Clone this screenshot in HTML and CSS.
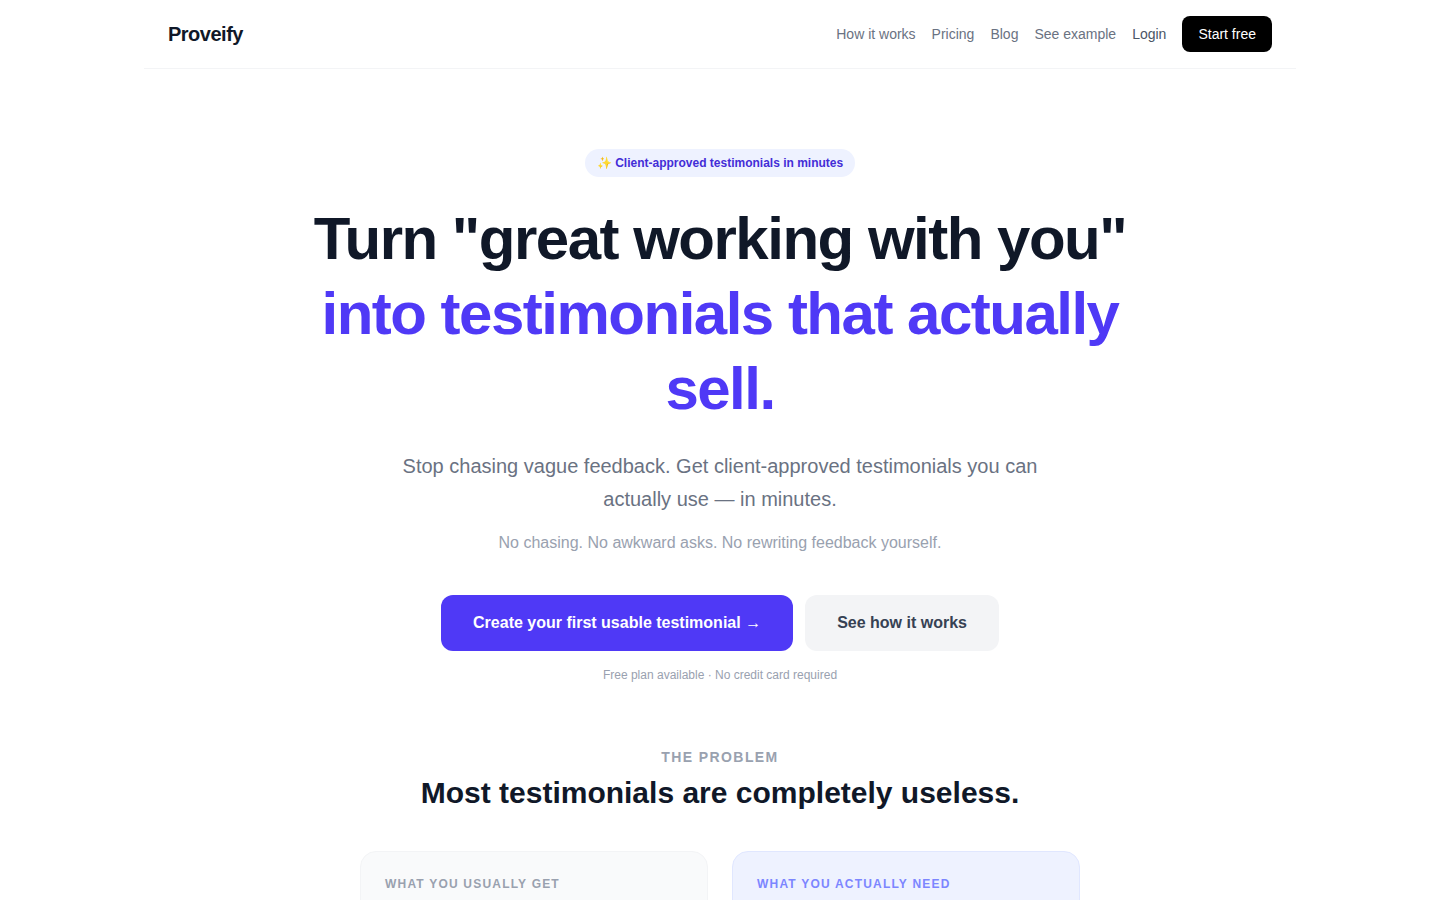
FILE: index.html
```html
<!DOCTYPE html>
<html lang="en">
<head>
<meta charset="utf-8">
<meta name="viewport" content="width=device-width, initial-scale=1">
<title>Proveify</title>
<link rel="stylesheet" href="styles.css">
</head>
<body>
<header class="site-header">
  <a class="brand" href="#">Proveify</a>
  <nav class="nav" aria-label="Main">
    <a class="nav-link" href="#how">How it works</a>
    <a class="nav-link" href="#pricing">Pricing</a>
    <a class="nav-link" href="#blog">Blog</a>
    <a class="nav-link" href="#example">See example</a>
    <a class="nav-link nav-login" href="#login">Login</a>
    <a class="nav-cta" href="#start">Start free</a>
  </nav>
</header>
<main>
  <section class="hero">
    <p class="badge">✨ Client-approved testimonials in minutes</p>
    <h1 class="headline">Turn "great working with you" <span class="accent">into testimonials that actually sell.</span></h1>
    <p class="lead">Stop chasing vague feedback. Get client-approved testimonials you can actually use — in minutes.</p>
    <p class="sublead">No chasing. No awkward asks. No rewriting feedback yourself.</p>
    <div class="actions">
      <a class="button button-primary" href="#start">Create your first usable testimonial →</a>
      <a class="button button-secondary" href="#how">See how it works</a>
    </div>
    <p class="note">Free plan available · No credit card required</p>
  </section>
  <section class="problem">
    <p class="eyebrow">The problem</p>
    <h2 class="problem-title">Most testimonials are completely useless.</h2>
    <div class="cards">
      <article class="card">
        <h3 class="card-label">What you usually get</h3>
      </article>
      <article class="card card-good">
        <h3 class="card-label">What you actually need</h3>
      </article>
    </div>
  </section>
</main>
</body>
</html>
```
FILE: styles.css
```css
* {
  box-sizing: border-box;
  margin: 0;
  padding: 0;
}

body {
  background: #fff;
  color: #101828;
  font-family: "Liberation Sans", Arial, sans-serif;
  font-size: 16px;
  line-height: 24px;
}

a {
  color: inherit;
  text-decoration: none;
}

.site-header {
  display: flex;
  flex-wrap: wrap;
  align-items: center;
  justify-content: space-between;
  max-width: 1152px;
  margin: 0 auto;
  padding: 16px 24px;
  border-bottom: 1px solid #f3f4f6;
}

.brand {
  font-size: 20px;
  line-height: 28px;
  font-weight: 700;
  letter-spacing: -0.025em;
}

.nav {
  display: flex;
  flex-wrap: wrap;
  align-items: center;
  gap: 16px;
  font-size: 14px;
  line-height: 20px;
}

.nav-link {
  color: #6a7282;
}

.nav-link.nav-login {
  color: #4a5565;
}

.nav-cta {
  padding: 8px 16px;
  border-radius: 8px;
  background: #000;
  color: #fff;
}

.hero {
  display: flex;
  flex-direction: column;
  align-items: center;
  max-width: 896px;
  margin: 0 auto;
  padding: 80px 24px 64px;
  text-align: center;
}

.badge {
  margin-bottom: 24px;
  padding: 6px 12px;
  border-radius: 14px;
  background: #eef2ff;
  color: #432dd7;
  font-size: 12px;
  line-height: 16px;
  font-weight: 700;
}

.headline {
  margin-bottom: 24px;
  font-size: 60px;
  line-height: 75px;
  font-weight: 700;
  letter-spacing: -0.025em;
}

.accent {
  color: #4f39f6;
}

.lead {
  max-width: 672px;
  margin-bottom: 15px;
  color: #6a7282;
  font-size: 20px;
  line-height: 33px;
}

.sublead {
  margin-bottom: 40px;
  color: #99a1af;
}

.actions {
  display: flex;
  flex-wrap: wrap;
  justify-content: center;
  gap: 12px;
  margin-bottom: 16px;
}

.button {
  padding: 16px 32px;
  border-radius: 12px;
  font-weight: 700;
}

.button-primary {
  background: #4f39f6;
  color: #fff;
}

.button-secondary {
  background: #f3f4f6;
  color: #364153;
}

.note {
  color: #99a1af;
  font-size: 12px;
  line-height: 16px;
}

.problem {
  max-width: 768px;
  margin: 0 auto;
  padding: 0 24px;
  text-align: center;
}

.eyebrow {
  margin-bottom: 8px;
  color: #99a1af;
  font-size: 14px;
  line-height: 20px;
  font-weight: 700;
  letter-spacing: 0.1em;
  text-transform: uppercase;
}

.problem-title {
  margin-bottom: 40px;
  font-size: 30px;
  line-height: 36px;
  font-weight: 700;
}

.cards {
  display: grid;
  grid-template-columns: 1fr 1fr;
  gap: 24px;
  text-align: left;
}

.card {
  padding: 24px;
  border: 1px solid #f3f4f6;
  border-radius: 16px;
  background: #f9fafb;
}

.card-good {
  border-color: #e0e7ff;
  background: #eef2ff;
}

.card-label {
  margin-bottom: 16px;
  color: #99a1af;
  font-size: 12px;
  line-height: 16px;
  font-weight: 700;
  letter-spacing: 0.1em;
  text-transform: uppercase;
}

.card-good .card-label {
  color: #7c86ff;
}
```
